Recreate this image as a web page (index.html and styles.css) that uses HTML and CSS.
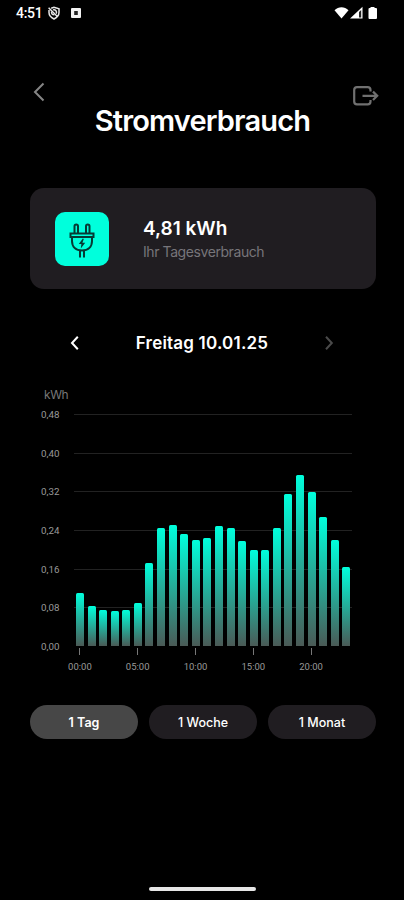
FILE: index.html
```html
<!DOCTYPE html>
<html lang="de">
<head>
    <meta charset="UTF-8">
    <meta name="viewport" content="width=device-width, initial-scale=1.0">
    <title>Stromverbrauch</title>
    <link rel="stylesheet" href="styles.css">
</head>
<body>
    <div class="statusbar">
        <span class="uhrzeit">4:51</span>
        <svg class="schild" width="14" height="14" viewBox="0 0 14 14">
            <path d="M4.2 2.2 L7 1.2 L12 2.8 V6.5 C12 9.5 9.8 11.6 7 13 C4.2 11.6 2 9.5 2 6.5 V4 M1.6 1.8 L10.6 10.8" />
            <path d="M6 3.9 C8.6 3.2 10.2 5.6 9.2 7.6 M4.6 5.6 C4.2 7.4 5.4 8.9 7.4 8.8" />
        </svg>
        <svg class="app" width="12" height="12" viewBox="0 0 12 12">
            <rect class="hell" x="1" y="1" width="10" height="10" rx="1" />
            <rect class="dunkel" x="4.2" y="4" width="3.6" height="4" />
        </svg>
        <svg class="empfang" width="44" height="14" viewBox="0 0 44 14">
            <path d="M0.5 4.2 C4.5 0.3 10.5 0.3 14.5 4.2 L7.5 12.6 Z" />
            <path d="M16 12.5 L28.5 0.8 V12.5 Z" />
            <path class="dunkel" d="M25 6 V11.5 H27.2 V4 Z" />
            <path d="M36.5 1 H40.5 V2 H42 Q43 2 43 3 V12 Q43 13 42 13 H35.5 Q34.5 13 34.5 12 V3 Q34.5 2 35.5 2 H36.5 Z" />
        </svg>
    </div>

    <div class="kopf">
        <svg class="zurueck" width="12" height="20" viewBox="0 0 12 20">
            <path d="M10.5 1.5 L2 10 L10.5 18.5" />
        </svg>
        <h1>Stromverbrauch</h1>
        <svg class="abmelden" width="26" height="20" viewBox="0 0 26 20">
            <path d="M17.5 5.5 V4 Q17.5 1.2 14.7 1.2 H4 Q1.2 1.2 1.2 4 V15.5 Q1.2 18.3 4 18.3 H14.7 Q17.5 18.3 17.5 15.5 V14" />
            <path d="M9.5 9.8 H24 M20 5.6 L24.2 9.8 L20 14" />
        </svg>
    </div>

    <div class="karte">
        <div class="symbol">
            <svg width="26" height="36" viewBox="0 0 26 36">
                <path d="M5.5 10.5 V3.2 Q5.5 1.5 7.2 1.5 Q9 1.5 9 3.2 V10.5 M17 10.5 V3.2 Q17 1.5 18.8 1.5 Q20.5 1.5 20.5 3.2 V10.5" />
                <path d="M1.5 10.5 H24.5 V14 H1.5 Z M3 14 V18 C3 24 7 27.5 13 27.5 C19 27.5 23 24 23 18 V14" />
                <path d="M11 28 V34.5 M15 28 V34.5" />
                <path class="blitz" d="M13.8 15.5 L9.8 21 H12.4 L11.8 25.5 L16.2 19.8 H13.4 L14.8 16 Z" />
            </svg>
        </div>
        <div>
            <div class="wert">4,81 kWh</div>
            <div class="info">Ihr Tagesverbrauch</div>
        </div>
    </div>

    <div class="datum">
        <svg width="10" height="16" viewBox="0 0 10 16"><path d="M7.8 1.8 L2 8 L7.8 14.2" /></svg>
        <span>Freitag 10.01.25</span>
        <svg class="inaktiv" width="10" height="16" viewBox="0 0 10 16"><path d="M2 1.8 L7.8 8 L2 14.2" /></svg>
    </div>

    <div class="diagramm">
        <div class="einheit">kWh</div>
        <div class="skala">
            <span>0,48</span>
            <span>0,40</span>
            <span>0,32</span>
            <span>0,24</span>
            <span>0,16</span>
            <span>0,08</span>
            <span>0,00</span>
        </div>
        <div class="linien">
            <i></i><i></i><i></i><i></i><i></i><i></i><i></i>
        </div>
        <div class="balken" id="balken"></div>
        <div class="stunden">
            <span>00:00</span>
            <span>05:00</span>
            <span>10:00</span>
            <span>15:00</span>
            <span>20:00</span>
        </div>
    </div>

    <div class="zeitraum">
        <button class="aktiv">1 Tag</button>
        <button>1 Woche</button>
        <button>1 Monat</button>
    </div>

    <div class="homebar"></div>

    <script>
        // Verbrauch pro Stunde in kWh
        const verbrauch = [
            0.110, 0.082, 0.074, 0.073, 0.074, 0.088, 0.172, 0.244,
            0.251, 0.232, 0.219, 0.223, 0.248, 0.244, 0.218, 0.199,
            0.199, 0.244, 0.314, 0.353, 0.319, 0.266, 0.219, 0.164
        ];
        const maximum = 0.48;
        const balken = document.getElementById('balken');

        verbrauch.forEach(wert => {
            const b = document.createElement('div');
            b.style.height = (wert / maximum * 100) + '%';
            balken.appendChild(b);
        });
    </script>
</body>
</html>
```
FILE: styles.css
```css
* {
    box-sizing: border-box;
}
body {
    margin: 0;
    height: 900px;
    display: flex;
    flex-direction: column;
    background: #000;
    color: #fff;
    font-family: Inter, "Liberation Sans", sans-serif;
    overflow: hidden;
}
svg {
    display: block;
    fill: none;
    flex-shrink: 0;
}
.statusbar {
    display: flex;
    align-items: center;
    height: 25px;
    padding: 0 26px 0 16px;
}
.uhrzeit {
    width: 31px;
    font-family: Roboto, sans-serif;
    font-size: 14px;
    font-weight: 500;
    letter-spacing: -0.3px;
}
.schild {
    stroke: #e8e8e8;
    stroke-width: 1.5;
}
.app {
    margin-left: 9px;
}
.hell {
    fill: #f2f2f2;
}
.empfang {
    margin-left: auto;
    fill: #fff;
}
.dunkel {
    fill: #222;
}
.kopf {
    display: flex;
    justify-content: space-between;
    align-items: flex-start;
    height: 163px;
    padding: 57px 25px 0 33px;
}
.zurueck {
    stroke: #858585;
    stroke-width: 2;
}
.abmelden {
    margin-top: 4px;
    stroke: #707070;
    stroke-width: 2.2;
}
h1 {
    margin: 21px 0 0 7px;
    font-size: 29px;
    line-height: 36px;
    font-weight: 600;
    letter-spacing: -0.85px;
}
.karte {
    display: flex;
    align-items: center;
    gap: 34px;
    height: 101px;
    margin: 0 28px 0 30px;
    padding-left: 25px;
    background: #201d21;
    border-radius: 14px;
}
.symbol {
    display: flex;
    align-items: center;
    justify-content: center;
    width: 54px;
    height: 54px;
    background: #00ffdc;
    border-radius: 10px;
}
.symbol svg {
    margin-top: 4px;
    stroke: #063a34;
    stroke-width: 2;
}
.symbol .blitz {
    fill: #063a34;
    stroke: none;
}
.wert {
    margin-top: 2px;
    font-size: 19px;
    line-height: 24px;
    font-weight: 600;
}
.info {
    font-size: 14px;
    line-height: 22px;
    letter-spacing: -0.42px;
    color: #77757a;
}
.datum {
    display: flex;
    align-items: center;
    justify-content: space-between;
    height: 24px;
    margin: 42px 70px 0 70px;
    font-size: 17px;
    font-weight: 600;
    letter-spacing: 0.2px;
}
.datum svg {
    stroke: #fff;
    stroke-width: 2;
}
.datum .inaktiv {
    stroke: #4a4a4a;
}
/* Linien und Balken liegen in derselben Zelle */
.diagramm {
    display: grid;
    grid-template-columns: 44px 278px;
    grid-template-rows: 33px 233px 28px;
    margin: 26px 0 0 30px;
}
.einheit {
    grid-column: 1 / 3;
    padding: 2px 0 0 14px;
    font-size: 12px;
    line-height: 24px;
    letter-spacing: -0.4px;
    color: #777;
}
.skala {
    grid-area: 2 / 1;
    display: flex;
    flex-direction: column;
    justify-content: space-between;
    margin: -5px 0;
    padding-left: 11px;
    font-family: Roboto, sans-serif;
    font-size: 9.8px;
    line-height: 11px;
    color: #999;
}
.linien {
    grid-area: 2 / 2;
    display: flex;
    flex-direction: column;
    justify-content: space-between;
}
.linien i {
    height: 1px;
    background: #222;
}
.linien i:last-child {
    background: none;
}
.balken {
    grid-area: 2 / 2;
    display: flex;
    align-items: flex-end;
    justify-content: space-between;
    padding: 0 1.5px 1px 2px;
    z-index: 1;
}
.balken div {
    width: 8px;
    background: linear-gradient(#00ffdc, #4a5a56);
    border-radius: 1.5px 1.5px 0 0;
}
.stunden {
    grid-area: 3 / 2;
    display: flex;
    margin-left: -23px;
    font-family: Roboto, sans-serif;
    font-size: 9.5px;
    line-height: 12px;
    color: #999;
}
.stunden span {
    width: 57.8px;
    flex-shrink: 0;
    text-align: center;
}
.stunden span::before {
    content: "";
    display: block;
    width: 1px;
    height: 7px;
    margin: 1px auto 6px;
    background: #777;
}
.zeitraum {
    display: flex;
    gap: 11px;
    margin: 30px 28px 0 30px;
}
.zeitraum button {
    flex: 1;
    height: 34px;
    padding: 0;
    border: none;
    border-radius: 17px;
    background: #201d21;
    color: #fff;
    font-family: inherit;
    font-size: 12.5px;
    font-weight: 500;
}
.zeitraum .aktiv {
    background: #474747;
    font-weight: 600;
}
.homebar {
    width: 107px;
    height: 4px;
    margin: auto auto 9px 149px;
    background: #e6e6e6;
    border-radius: 2px;
}
```
